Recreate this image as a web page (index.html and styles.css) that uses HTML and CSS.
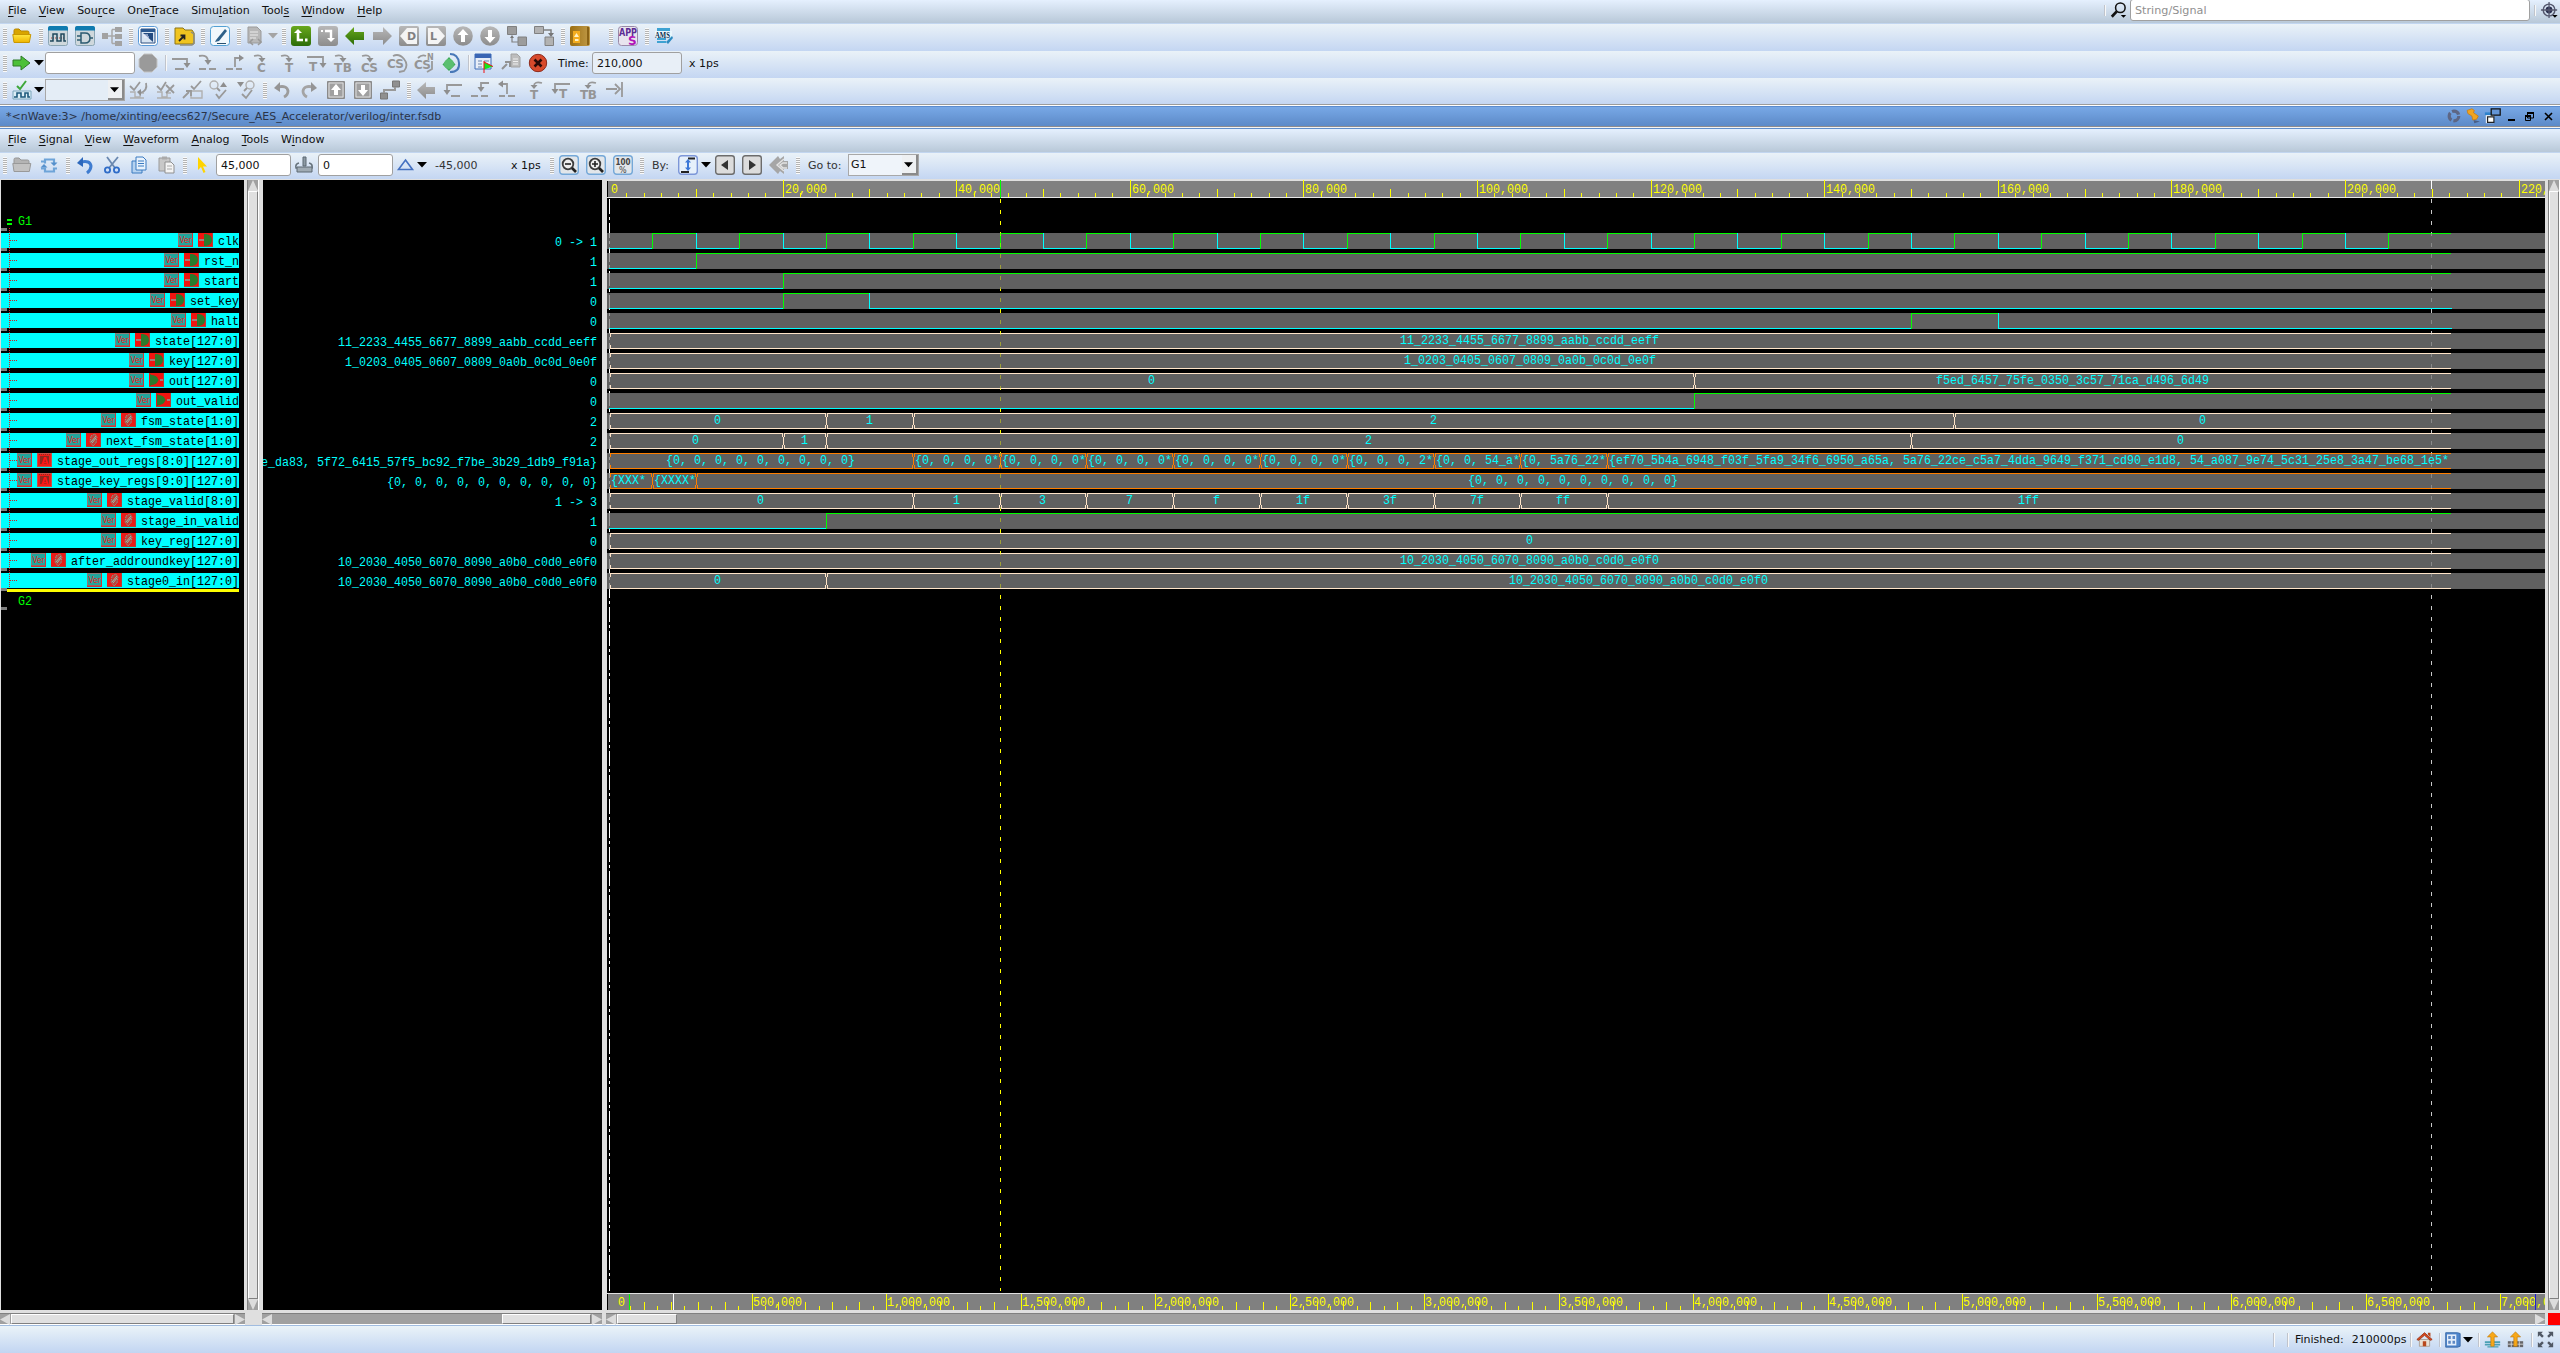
FILE: index.html
```html
<!DOCTYPE html>
<html lang="en">
<head>
<meta charset="utf-8">
<title>nWave</title>
<link rel="stylesheet" href="styles.css">
</head>
<body>
<svg class="sprite" aria-hidden="true">
  <defs>
    <linearGradient id="gGray" x1="0" y1="0" x2="0" y2="1"><stop offset="0" stop-color="#b8b8b8"/><stop offset="1" stop-color="#8c8c8c"/></linearGradient>
    <linearGradient id="gGreen" x1="0" y1="0" x2="0" y2="1"><stop offset="0" stop-color="#68a81c"/><stop offset="1" stop-color="#2c6c08"/></linearGradient>
    <linearGradient id="gGold" x1="0" y1="0" x2="1" y2="0"><stop offset="0" stop-color="#9c6e10"/><stop offset="1" stop-color="#c09a48"/></linearGradient>
    <linearGradient id="gYel" x1="0" y1="0" x2="0" y2="1"><stop offset="0" stop-color="#ffe640"/><stop offset="1" stop-color="#eeb400"/></linearGradient>
  </defs>
  <symbol id="folder" viewBox="0 0 20 20"><path d="M2 4.500q0-1.500 1.500-1.500h3.500l2 2h6.500q1.500 0 1.500 1.500V9H2z" fill="#d8a400" stroke="#b88600"/><path d="M.8 8.500h18l-1.500 8H2z" fill="url(#gYel)" stroke="#c99700"/></symbol>
  <symbol id="folder-gray" viewBox="0 0 20 20"><path d="M2 4.500q0-1.500 1.500-1.500h3.500l2 2h6.500q1.500 0 1.500 1.500V9H2z" fill="#b4b4b4" stroke="#969696"/><path d="M.8 8.500h18l-1.500 8H2z" fill="#c2c2c2" stroke="#999"/></symbol>
  <symbol id="wave-win" viewBox="0 0 20 20"><rect x=".5" y=".5" width="19" height="19" rx="2" fill="#cfd8dc" stroke="#8ba6b4"/><path d="M0 4.500V2q0-2 2-2h16q2 0 2 2v2.500z" fill="#0f7bb0"/><path d="M3 12h14" stroke="#b04a3a" stroke-dasharray="1 1"/><path d="M2 15h3V8h4v7h4V8h3v7h2" fill="none" stroke="#20485c" stroke-width="1.500"/></symbol>
  <symbol id="gate-win" viewBox="0 0 20 20"><rect x=".5" y=".5" width="19" height="19" rx="2" fill="#cfd8dc" stroke="#8ba6b4"/><path d="M0 4.500V2q0-2 2-2h16q2 0 2 2v2.500z" fill="#0f7bb0"/><path d="M6 7h4q5 0 5 5t-5 5H6zM2 10h4M2 14h4M15 12h3" fill="none" stroke="#2b5a70" stroke-width="1.500"/></symbol>
  <symbol id="tree-gray" viewBox="0 0 20 20"><path d="M0 7h6v6H0zM13 1h7v5h-7zM13 8h7v5h-7zM13 15h7v5h-7z" fill="#a2a2a2"/><path d="M6 10h7M10 3.500v14M10 3.500h3M10 17.500h3" stroke="#a8a8a8" fill="none" stroke-width="1.500"/></symbol>
  <symbol id="src-win" viewBox="0 0 20 20"><rect x=".5" y=".5" width="19" height="19" rx="3" fill="#fff" stroke="#5a9ad8"/><path d="M3 3h14v14H3z" fill="#d8e4f2" stroke="#2c4f80"/><path d="M3 3h14v3H3z" fill="#2c5890"/><path d="M5 7h10v9z" fill="#234a80"/><path d="M5 9h5M6 11h5" stroke="#eef" /></symbol>
  <symbol id="folder-open" viewBox="0 0 20 20"><path d="M1 2h8l2 2h7l2 3v11H1z" fill="#f0c420" stroke="#8c7418"/><path d="M17 6l3 2v9l-2 2H6" fill="none" stroke="#8d8d80" stroke-width="1.500"/><path d="M5 15l5-5M6.500 9.500h4v4" fill="none" stroke="#222" stroke-width="1.800"/></symbol>
  <symbol id="pen" viewBox="0 0 20 20"><rect x=".5" y=".5" width="19" height="19" rx="3" fill="#f2f8fc" stroke="#52a0d4"/><path d="M6 14L15 3l2 2-8 10-4 1z" fill="#2e6088"/><path d="M7 17.500h9" stroke="#28506e"/></symbol>
  <symbol id="doc" viewBox="0 0 20 20"><path d="M2 1h9l4 4v12H2z" fill="#b8b8b8" stroke="#9b9b9b"/><path d="M4 6h8M4 9h8M4 12h6" stroke="#ececec"/><path d="M7 13l-3 3 3 3M12 13l3 3-3 3" fill="none" stroke="#999" stroke-width="1.500"/></symbol>
  <symbol id="down" viewBox="0 0 10 20"><path d="M0 7h10L5 12.500z" fill="currentColor"/></symbol>
  <symbol id="turn-green" viewBox="0 0 20 20"><rect width="20" height="20" rx="3" fill="url(#gGreen)"/><path d="M7 6v8h5" fill="none" stroke="#fff" stroke-width="2.600"/><path d="M3 7l4-4 4 4zM14 12.500h2.500v3H14z" fill="#fff"/></symbol>
  <symbol id="turn-gray" viewBox="0 0 20 20"><rect width="20" height="20" rx="3" fill="url(#gGray)"/><path d="M7 5h6v8" fill="none" stroke="#fff" stroke-width="2.400"/><path d="M9 12h8l-4 4zM3 4h2v2H3z" fill="#fff"/></symbol>
  <symbol id="left-green" viewBox="0 0 20 20"><path d="M0 10L9 1v5h10v8H9v5z" fill="url(#gGreen)"/></symbol>
  <symbol id="right-gray" viewBox="0 0 20 20"><path d="M20 10L11 1v5H1v8h10v5z" fill="url(#gGray)"/></symbol>
  <symbol id="left-gray" viewBox="0 0 20 20"><path d="M1 10L10 2v5h9v7h-9v5z" fill="url(#gGray)"/></symbol>
  <symbol id="drv" viewBox="0 0 20 20"><rect width="20" height="20" rx="2" fill="url(#gGray)"/><path d="M1 10l7-8h10v16H8z" fill="#f4f4f4"/><text x="8" y="14" font-size="11" font-weight="bold" fill="#808080">D</text></symbol>
  <symbol id="load" viewBox="0 0 20 20"><rect width="20" height="20" rx="2" fill="url(#gGray)"/><path d="M19 10l-7-8H2v16h10z" fill="#f4f4f4"/><text x="4" y="14" font-size="11" font-weight="bold" fill="#808080">L</text></symbol>
  <symbol id="circ-up" viewBox="0 0 20 20"><circle cx="10" cy="10" r="9.800" fill="url(#gGray)"/><path d="M10 3l5.500 6H12v7H8V9H4.500z" fill="#fff"/></symbol>
  <symbol id="circ-down" viewBox="0 0 20 20"><circle cx="10" cy="10" r="9.800" fill="url(#gGray)"/><path d="M10 17l5.500-6H12V4H8v7H4.500z" fill="#fff"/></symbol>
  <symbol id="blk-a" viewBox="0 0 20 20"><path d="M.5.500h9v8h-9zM11 11h8.500v8.500H11z" fill="#9c9c9c" stroke="#808080"/><path d="M5 11v5h6" fill="none" stroke="#808080" stroke-width="1.200"/><path d="M3 12l2-3 2 3z" fill="#777"/></symbol>
  <symbol id="blk-b" viewBox="0 0 20 20"><path d="M.5.500h9v7h-9zM11 11h8.500v8.500H11z" fill="#b2b2b2" stroke="#808080"/><path d="M10 4h7v5" fill="none" stroke="#808080" stroke-width="1.500"/><path d="M14 7h6l-3 4z" fill="#777"/></symbol>
  <symbol id="book" viewBox="0 0 20 20"><rect width="20" height="20" rx="2" fill="url(#gGold)"/><path d="M17 1h2v18h-2z" fill="#8a6214"/><path d="M3 5h7v12H3z" fill="#f4ad20"/><path d="M6.500 7l2.500 4H4zM5 13h3.500v2H5z" fill="#fff2c4"/></symbol>
  <symbol id="apps" viewBox="0 0 20 20"><rect x=".5" y=".5" width="19" height="19" rx="3" fill="#e8e4ee" stroke="#9a8aa8"/><text x="1" y="10" font-size="10" font-weight="bold" fill="#5c2c94" textLength="18" lengthAdjust="spacingAndGlyphs">APP</text><text x="10" y="19" font-size="12" font-weight="bold" fill="#b014b8">S</text></symbol>
  <symbol id="ams" viewBox="0 0 20 20"><path d="M3 2h13v3H3zM3 12h9v2H3zM3 15h9v2H3z" fill="#3ea2d2"/><path d="M1 5h17v7H1z" fill="#eaf6fc"/><text x="1" y="12" font-size="8" font-weight="bold" fill="#0a2c4c" font-family="Liberation Serif" textLength="15" lengthAdjust="spacingAndGlyphs">AMS</text><path d="M12 16l6-6 1 2-5 6z" fill="#2d8ac0"/></symbol>
  <symbol id="go" viewBox="0 0 20 20"><path d="M1 7h8V3l9 7-9 7v-4H1z" fill="#4cc038" stroke="#2f7a26"/></symbol>
  <symbol id="stop" viewBox="0 0 20 20"><path d="M6 1h8l5 5v8l-5 5H6l-5-5V6z" fill="#9a9a9a" stroke="#c4c4c4"/></symbol>
  <symbol id="s-over" viewBox="0 0 20 20"><path d="M1 6h15v6M4 16h9" class="gs"/><path d="M12.500 10h7L16 15z" class="gf"/></symbol>
  <symbol id="s-into" viewBox="0 0 20 20"><path d="M1 3q9-2 9 6M1 16h7M11 16h7" class="gs"/><path d="M6.500 7h7L10 12z" class="gf"/></symbol>
  <symbol id="s-out" viewBox="0 0 20 20"><path d="M10 14V5h5M1 16h7M11 16h6" class="gs"/><path d="M14 1.500l5 3.500-5 3.500z" class="gf"/></symbol>
  <symbol id="s-hook" viewBox="0 0 20 20"><path d="M2 3q8-2 8 3" class="gs"/><path d="M6.500 5h7L10 9.500z" class="gf"/></symbol>
  <symbol id="s-c" viewBox="0 0 20 20"><use href="#s-hook"/><text x="5" y="19" class="gt">C</text></symbol>
  <symbol id="s-t" viewBox="0 0 20 20"><use href="#s-hook"/><text x="6" y="19" class="gt">T</text></symbol>
  <symbol id="s-tt" viewBox="0 0 20 20"><path d="M1 4h16v8" class="gs"/><path d="M13.500 10h7L17 15z" class="gf"/><text x="3" y="18" class="gt">T</text></symbol>
  <symbol id="s-tb" viewBox="0 0 20 20"><use href="#s-hook"/><text x="1" y="19" class="gt" textLength="18">TB</text></symbol>
  <symbol id="s-cs" viewBox="0 0 20 20"><use href="#s-hook"/><text x="1" y="19" class="gt" textLength="17">CS</text></symbol>
  <symbol id="s-cs2" viewBox="0 0 20 20"><path d="M6 3q6-3 11 3t0 12l-5 1" class="gs"/><text x="0" y="15" class="gt" textLength="17">CS</text></symbol>
  <symbol id="s-csn" viewBox="0 0 20 20"><path d="M4 5q4-4 8-2M18 8v8l-5 3" class="gs"/><text x="0" y="16" class="gt" textLength="17">CS</text><text x="13" y="7" font-size="8" font-weight="bold" fill="#959595">N</text></symbol>
  <symbol id="s-green" viewBox="0 0 20 20"><path d="M9 1q8 0 9 9t-9 9" fill="none" stroke="#4878b8" stroke-width="2"/><path d="M8 4l6.500 7.500L8 18l-6.500-6.500z" fill="#3faa58"/><circle cx="8" cy="11" r="5" fill="#5abf70"/></symbol>
  <symbol id="form" viewBox="0 0 20 20"><path d="M1 1h16v15H1z" fill="#e8eef8" stroke="#3c6cb8"/><path d="M1 1h16v4H1z" fill="#3a66b4"/><path d="M4 8h4M4 11h4M10 8h5M4 14h4" stroke="#6a86b0"/><path d="M10 9l9 4.500-9 3z" fill="#12e81c"/><path d="M10 8v12M10 9l9 4.500" stroke="#f01010"/></symbol>
  <symbol id="exp-doc" viewBox="0 0 20 20"><path d="M10 1h6l3 3v10h-9z" fill="#bdbdbd" stroke="#a2a2a2"/><path d="M12 6h5M12 8.500h5M12 11h5" stroke="#eee"/><path d="M1 16l5-5M4 9h5v5" fill="none" stroke="#929292" stroke-width="2"/></symbol>
  <symbol id="redx" viewBox="0 0 20 20"><circle cx="10" cy="10" r="8.700" fill="#d84a2c" stroke="#8c2a1c"/><path d="M6.500 6.500l7 7M13.500 6.500l-7 7" stroke="#2a0a08" stroke-width="2.600"/></symbol>
  <symbol id="wave-chk" viewBox="0 0 20 20"><path d="M1 11h18v8H1z" fill="#dceef6" stroke="#7aa6bc"/><path d="M2 17h3v-4h4v4h4v-4h3v4h2" fill="none" stroke="#1e5a7c" stroke-width="1.600"/><path d="M5 6l3 3 6-8" fill="none" stroke="#3ea83a" stroke-width="2"/></symbol>
  <symbol id="w1" viewBox="0 0 20 20"><path d="M2 12h5v5h5v-4h4M2 18h14" class="gl"/><path d="M2 6l4 4 6-8" class="gs"/><path d="M18 3q2 8-6 10" class="gs"/><path d="M13 9v7l-4-4z" class="gf"/></symbol>
  <symbol id="w2" viewBox="0 0 20 20"><path d="M2 12h5v5h5v-4h4M2 18h14" class="gl"/><path d="M2 6l4 4 5-8M11 5l8 8M19 5l-8 8" class="gs"/></symbol>
  <symbol id="w3" viewBox="0 0 20 20"><path d="M9 11h11v7H9z" class="gl"/><path d="M9 6l3 3 7-8M1 18l6-6M4 11h5v5" class="gs"/></symbol>
  <symbol id="w4" viewBox="0 0 20 20"><circle cx="5" cy="5" r="4" class="gl"/><path d="M8 8l3 3M7 14l3 4 7-8" class="gs"/><path d="M11 7h7l-3.500-5z" class="gf"/></symbol>
  <symbol id="w5" viewBox="0 0 20 20"><circle cx="14" cy="5" r="4" class="gl"/><path d="M11 8l-3 3M6 14l4 4 6-8" class="gs"/><path d="M1 2h7L4.500 7z" class="gf"/></symbol>
  <symbol id="undo-g" viewBox="0 0 20 20"><path d="M6 7q9-2 10 4 0 4-4 6" fill="none" stroke="#9c9c9c" stroke-width="2.800"/><path d="M2 8l6-6v10z" fill="#959595"/></symbol>
  <symbol id="redo-g" viewBox="0 0 20 20"><path d="M14 7q-9-2-10 4 0 4 4 6" fill="none" stroke="#a4a4a4" stroke-width="2.800"/><path d="M18 8l-6-6v10z" fill="#959595"/></symbol>
  <symbol id="box-up" viewBox="0 0 20 20"><path d="M1.500 1.500h17v17h-17z" fill="#a0a0a0" stroke="#8a8a8a"/><path d="M3 3h14v14H3z" fill="none" stroke="#ddd"/><path d="M10 4l5 6h-3v5H8v-5H5z" fill="#fff"/></symbol>
  <symbol id="box-down" viewBox="0 0 20 20"><path d="M1.500 1.500h17v17h-17z" fill="#a0a0a0" stroke="#8a8a8a"/><path d="M3 3h14v14H3z" fill="none" stroke="#ddd"/><path d="M10 16l5-6h-3V5H8v5H5z" fill="#fff"/></symbol>
  <symbol id="conn" viewBox="0 0 20 20"><path d="M12.500 1h7v6h-7zM.5 13h7v6h-7z" fill="#909090" stroke="#777"/><path d="M4 13v-3h11V7" fill="none" stroke="#999" stroke-width="2"/></symbol>
  <symbol id="b-over" viewBox="0 0 20 20"><path d="M19 5H4v6M8 16h9" class="gs"/><path d="M.5 10h7L4 15z" class="gf"/></symbol>
  <symbol id="b-into" viewBox="0 0 20 20"><path d="M19 3h-8v6M1 16h7M11 16h7" class="gs"/><path d="M7.500 7h7L11 12z" class="gf"/></symbol>
  <symbol id="b-out" viewBox="0 0 20 20"><path d="M10 14V4H5M2 16h6M11 16h7" class="gs"/><path d="M6 .5L1 4l5 3.500z" class="gf"/></symbol>
  <symbol id="b-t" viewBox="0 0 20 20"><path d="M18 3q-8-2-8 3" class="gs"/><path d="M6.500 5h7L10 9z" class="gf"/><text x="6" y="19" class="gt">T</text></symbol>
  <symbol id="b-tt" viewBox="0 0 20 20"><path d="M19 4H4v6" class="gs"/><path d="M.5 9h7L4 14z" class="gf"/><text x="8" y="18" class="gt">T</text></symbol>
  <symbol id="b-tb" viewBox="0 0 20 20"><path d="M18 3q-8-2-8 3" class="gs"/><path d="M6.500 5h7L10 9z" class="gf"/><text x="2" y="19" class="gt" textLength="17">TB</text></symbol>
  <symbol id="to-end" viewBox="0 0 20 20"><path d="M1 9h11M17 2v15" class="gs"/><path d="M10 4l5 5-5 5" class="gs"/></symbol>
  <symbol id="reload" viewBox="0 0 20 20"><path d="M2 6.500h4M6 8.500V4.500h9v4M2 13.500h4v3h9v-4M15 13.500h3" fill="none" stroke="#6ea4d8" stroke-width="2.200"/><path d="M11.500 7.500h7L15 11zM1.500 12.500h7L5 9z" fill="#5590cc"/></symbol>
  <symbol id="undo" viewBox="0 0 20 20"><path d="M6 7q9-2 10 4 0 4-4 7" fill="none" stroke="#3f7cd0" stroke-width="3"/><path d="M2 8l6-6v10z" fill="#2d68bc"/></symbol>
  <symbol id="cut" viewBox="0 0 20 20"><path d="M5 2l8 11M16 2L7 13" stroke="#6a88b0" stroke-width="1.800"/><circle cx="5.500" cy="15" r="2.600" fill="none" stroke="#2f6cc8" stroke-width="1.800"/><circle cx="14.500" cy="15" r="2.600" fill="none" stroke="#2f6cc8" stroke-width="1.800"/></symbol>
  <symbol id="copy" viewBox="0 0 20 20"><path d="M3 6h10v12H3z" fill="#b5d2f0" stroke="#3a7ac0"/><path d="M7 2h7l3 3v10H7z" fill="#e8f2fc" stroke="#3a7ac0"/><path d="M9 6h6M9 8.500h6M9 11h6" stroke="#3a7ac0"/></symbol>
  <symbol id="paste" viewBox="0 0 20 20"><path d="M3 3h11v13H3z" fill="#c8c8c8" stroke="#9a9a9a"/><path d="M6 1.500h5v3H6z" fill="#aaa"/><path d="M9 7h6l3 3v8H9z" fill="#f4f4f4" stroke="#8f8f8f"/><path d="M11 11h5M11 14h5" stroke="#aaa"/></symbol>
  <symbol id="cursor" viewBox="0 0 20 20"><path d="M6 2v13l3-3 2.500 6 2-1-2.500-5.500h4z" fill="#ffd400"/></symbol>
  <symbol id="probe" viewBox="0 0 20 20"><path d="M9 2h3v9H9z" fill="#8d9aa4" stroke="#5c6872"/><path d="M5 8q-4 1-3 5h16q1-4-3-5" fill="none" stroke="#66727c" stroke-width="1.600"/><path d="M3 12h15v5H3z" fill="#a0abb4" stroke="#5c6872"/></symbol>
  <symbol id="delta" viewBox="0 0 20 20"><path d="M9.500 5l7 9.500h-14z" fill="none" stroke="#4470c0" stroke-width="1.600"/></symbol>
  <symbol id="btn" viewBox="0 0 20 20"><rect x=".7" y=".7" width="18.600" height="18.600" rx="3" fill="#e2e6ea" stroke="#74a8d8" stroke-width="1.400"/></symbol>
  <symbol id="zout" viewBox="0 0 20 20"><use href="#btn"/><circle cx="9" cy="9" r="5.300" fill="#eee" stroke="#3c3c3c" stroke-width="1.800"/><path d="M13 13l4 4" stroke="#222" stroke-width="2.600"/><path d="M6 9h6" stroke="#222" stroke-width="1.600"/></symbol>
  <symbol id="zin" viewBox="0 0 20 20"><use href="#btn"/><circle cx="9" cy="9" r="5.300" fill="#eee" stroke="#3c3c3c" stroke-width="1.800"/><path d="M13 13l4 4" stroke="#222" stroke-width="2.600"/><path d="M6 9h6M9 6v6" stroke="#222" stroke-width="1.600"/></symbol>
  <symbol id="z100" viewBox="0 0 20 20"><use href="#btn"/><text x="2.500" y="9.500" font-size="8.500" font-weight="bold" fill="#444" textLength="15" lengthAdjust="spacingAndGlyphs">100</text><text x="6" y="17.500" font-size="8" fill="#444">%</text></symbol>
  <symbol id="edge" viewBox="0 0 20 20"><rect x=".7" y=".7" width="18.600" height="18.600" rx="3" fill="#e6f0fb" stroke="#7c96d8" stroke-width="1.400"/><path d="M10 3.500h7M3 17h8" stroke="#222" stroke-width="2"/><path d="M10 6v8" stroke="#3c78d8" stroke-width="2"/><path d="M7 7.500L10 4l3 3.500zM7 12.500l3 3.500 3-3.500z" fill="#3c78d8"/></symbol>
  <symbol id="prev" viewBox="0 0 20 20"><rect x=".7" y=".7" width="18.600" height="18.600" rx="2.500" fill="#dcdcdc" stroke="#6c6c6c" stroke-width="1.400"/><path d="M6 10l7-5v10z" fill="#333"/></symbol>
  <symbol id="next" viewBox="0 0 20 20"><rect x=".7" y=".7" width="18.600" height="18.600" rx="2.500" fill="#dcdcdc" stroke="#6c6c6c" stroke-width="1.400"/><path d="M14 10L7 5v10z" fill="#333"/></symbol>
  <symbol id="back2" viewBox="0 0 20 20"><path d="M0 10l9-9 2 3 4-3v5h4v8h-4v5l-4-3-2 3z" fill="#a6a6a6"/><path d="M15 4l-7 6 7 6M18 8h-4l-3 2 3 3h4" fill="none" stroke="#e4e4e4" stroke-width="1.400"/></symbol>
  <symbol id="search" viewBox="0 0 20 20"><circle cx="11.500" cy="7.500" r="5.300" fill="none" stroke="#111" stroke-width="1.700"/><path d="M7.500 11.500L2 17.500" stroke="#111" stroke-width="3"/><path d="M12 15.500h6l-3 3z"/></symbol>
  <symbol id="target" viewBox="0 0 20 20"><circle cx="9.500" cy="10" r="6.500" fill="none" stroke="#55586e" stroke-width="1.600"/><circle cx="9.500" cy="10" r="3.800" fill="#2c3050"/><path d="M9.500 1v18M.5 10h18" stroke="#55586e" stroke-width="1.400"/><path d="M13 15.500h6l-3 3z"/></symbol>
  <symbol id="aperture" viewBox="0 0 20 20"><circle cx="10" cy="10" r="6" fill="none" stroke="#5d6684" stroke-width="4" stroke-dasharray="10 2.500"/></symbol>
  <symbol id="pin" viewBox="0 0 20 20"><path d="M10 15l8 2-7 2z" fill="#4a5f86"/><path d="M2 3l6-2 3 2-1 3 6 4-2 4-5 1-1-5-5-3z" fill="#f0a420" stroke="#c87c10"/></symbol>
  <symbol id="popout" viewBox="0 0 20 20"><path d="M2 7h9v11H2z" fill="#e8eef4"/><path d="M1 6h9v3H1z" fill="#2d82cc"/><path d="M4 11h7v6H4z" fill="#fff" stroke="#222" stroke-width="1.300"/><path d="M8 2h10v7H8z" fill="#6495d6" stroke="#111" stroke-width="1.400"/></symbol>
  <symbol id="home" viewBox="0 0 20 20"><path d="M4 10h12v8H4z" fill="#e8e0d4" stroke="#a89c90"/><path d="M1 10l9-8 9 8-2 1-7-6-7 6z" fill="#d44a20" stroke="#9a3010"/><path d="M14 2h3v5l-3-3zM8 12h4v6H8z" fill="#b8481c"/></symbol>
  <symbol id="gridw" viewBox="0 0 20 20"><path d="M2 2h14l3 1v15l-3 1H2z" fill="#4f86cc" stroke="#3464a4"/><path d="M3.500 4h11v13h-11z" fill="#e4eefa"/><path d="M5 6h3v3.500H5zM10 6h3v3.500h-3zM5 11.500h3V15H5zM10 11.500h3V15h-3z" fill="#5c88c4"/></symbol>
  <symbol id="st1" viewBox="0 0 20 20"><path d="M1 12h18v2H1zM1 15h18v2H1zM4 18h13v1.500H4z" fill="#4aa0b4"/><path d="M10 1l6 6h-4v11H8V7H4z" fill="#f8a818" stroke="#b87408" stroke-width=".7"/></symbol>
  <symbol id="st2" viewBox="0 0 20 20"><path d="M1 12h18v7H1z" fill="#66666a"/><path d="M1 15.500h18M5 12v7M14.500 12v7" stroke="#ddd"/><path d="M10 1l6 6h-4v11H8V7H4z" fill="#f8a818" stroke="#b87408" stroke-width=".7"/></symbol>
  <symbol id="full" viewBox="0 0 20 20"><path d="M1 1h6L5 3l3 3-2 2-3-3-2 2zM19 1v6l-2-2-3 3-2-2 3-3-2-2zM1 19v-6l2 2 3-3 2 2-3 3 2 2zM19 19h-6l2-2-3-3 2-2 3 3 2-2z" fill="#505864"/></symbol>
  <symbol id="ver" viewBox="0 0 15 14"><path d="M0 0h15v14H0z" fill="#c83838"/><path d="M0 0h14v12.500H0z" fill="#8c7c78"/><path d="M1 1h13v11H1z" fill="#22a49c"/><text x="1.500" y="9.500" font-size="8.500" fill="#f01818" textLength="12" lengthAdjust="spacingAndGlyphs">Ver</text></symbol>
  <symbol id="t-in" viewBox="0 0 15 14"><path d="M0 0h15v14H0z" fill="#b83c34"/><path d="M0 0h14v13H0z" fill="#f01410"/><path d="M6 1h2q6 1 6 6t-6 6H6z" fill="#2a7a2c"/><path d="M1 7h5" stroke="#5ce0e0"/></symbol>
  <symbol id="t-out" viewBox="0 0 15 14"><path d="M0 0h15v14H0z" fill="#b83c34"/><path d="M0 0h14v13H0z" fill="#f01410"/><path d="M1 1l9 6-9 6z" fill="#2a7a2c"/><path d="M1 2q8 0 8 5t-8 5z" fill="#2a7a2c"/><path d="M11 7h3" stroke="#5ce0e0"/></symbol>
  <symbol id="t-reg" viewBox="0 0 15 14"><path d="M0 0h15v14H0z" fill="#b83c34"/><path d="M0 0h14v13H0z" fill="#e81c18"/><path d="M5 3l4-2 2 3-1 6-3 3-3-4z" fill="#c04038" stroke="#7aa494" stroke-dasharray="1.500 1"/><path d="M5 9l5-6M6 10l4-5" stroke="#90c0b0"/></symbol>
  <symbol id="t-arr" viewBox="0 0 15 14"><path d="M0 0h15v14H0z" fill="#c85048"/><path d="M1 1h13v12H1z" fill="#f01c18"/><path d="M3 3h9v8H3z" fill="#8c2820"/><path d="M2 1.500h11" stroke="#8c2820" stroke-dasharray="1 1"/><text x="4.300" y="10.500" font-size="9" font-weight="bold" fill="#ff1414">A</text></symbol>
</svg>

<div class="menubar">
  <span><u>F</u>ile</span><span><u>V</u>iew</span><span>Sou<u>r</u>ce</span><span>One<u>T</u>race</span><span>Simu<u>l</u>ation</span><span>Tool<u>s</u></span><span><u>W</u>indow</span><span><u>H</u>elp</span>
  <div class="finder"><i class="sep"></i><svg class="ic fi"><use href="#search"/></svg><div class="field find">String/Signal</div><i class="sep"></i><svg class="ic ti"><use href="#target"/></svg></div>
</div>

<div class="toolbar">
  <i class="grip"></i><svg class="ic"><use href="#folder"/></svg>
  <i class="grip"></i><svg class="ic"><use href="#wave-win"/></svg><svg class="ic"><use href="#gate-win"/></svg><svg class="ic"><use href="#tree-gray"/></svg>
  <i class="grip"></i><svg class="ic"><use href="#src-win"/></svg>
  <i class="grip"></i><svg class="ic"><use href="#folder-open"/></svg>
  <i class="grip"></i><svg class="ic"><use href="#pen"/></svg>
  <i class="grip"></i><svg class="ic tight"><use href="#doc"/></svg><svg class="dd dim"><use href="#down"/></svg>
  <i class="grip"></i><svg class="ic"><use href="#turn-green"/></svg><svg class="ic"><use href="#turn-gray"/></svg><svg class="ic"><use href="#left-green"/></svg><svg class="ic"><use href="#right-gray"/></svg><svg class="ic"><use href="#drv"/></svg><svg class="ic"><use href="#load"/></svg><svg class="ic"><use href="#circ-up"/></svg><svg class="ic"><use href="#circ-down"/></svg><svg class="ic"><use href="#blk-a"/></svg><svg class="ic"><use href="#blk-b"/></svg>
  <i class="grip"></i><svg class="ic wide"><use href="#book"/></svg>
  <i class="grip"></i><svg class="ic"><use href="#apps"/></svg>
  <i class="grip"></i><svg class="ic"><use href="#ams"/></svg>
</div>

<div class="toolbar">
  <i class="grip"></i><svg class="ic tight"><use href="#go"/></svg><svg class="dd"><use href="#down"/></svg>
  <div class="field run"></div><svg class="ic"><use href="#stop"/></svg><i class="sep"></i>
  <svg class="ic"><use href="#s-over"/></svg><svg class="ic"><use href="#s-into"/></svg><svg class="ic"><use href="#s-out"/></svg><svg class="ic"><use href="#s-c"/></svg><svg class="ic"><use href="#s-t"/></svg><svg class="ic"><use href="#s-tt"/></svg><svg class="ic"><use href="#s-tb"/></svg><svg class="ic"><use href="#s-cs"/></svg><svg class="ic"><use href="#s-cs2"/></svg><svg class="ic"><use href="#s-csn"/></svg><svg class="ic"><use href="#s-green"/></svg><i class="sep"></i>
  <svg class="ic"><use href="#form"/></svg><svg class="ic"><use href="#exp-doc"/></svg><svg class="ic"><use href="#redx"/></svg>
  <span class="lbl time">Time:</span><div class="field tval">210,000</div><span class="lbl">x 1ps</span>
</div>

<div class="toolbar third">
  <i class="grip"></i><svg class="ic tight"><use href="#wave-chk"/></svg><svg class="dd"><use href="#down"/></svg>
  <div class="combo c1"><span></span><b><svg class="dd"><use href="#down"/></svg></b></div>
  <svg class="ic"><use href="#w1"/></svg><svg class="ic"><use href="#w2"/></svg><svg class="ic"><use href="#w3"/></svg><svg class="ic"><use href="#w4"/></svg><svg class="ic"><use href="#w5"/></svg>
  <i class="grip"></i><svg class="ic"><use href="#undo-g"/></svg><svg class="ic"><use href="#redo-g"/></svg><svg class="ic"><use href="#box-up"/></svg><svg class="ic"><use href="#box-down"/></svg><svg class="ic"><use href="#conn"/></svg>
  <i class="grip"></i><svg class="ic"><use href="#left-gray"/></svg><svg class="ic"><use href="#b-over"/></svg><svg class="ic"><use href="#b-into"/></svg><svg class="ic"><use href="#b-out"/></svg><svg class="ic"><use href="#b-t"/></svg><svg class="ic"><use href="#b-tt"/></svg><svg class="ic"><use href="#b-tb"/></svg><svg class="ic"><use href="#to-end"/></svg>
</div>

<div class="titlebar">
  <span class="ttext">*&lt;nWave:3&gt; /home/xinting/eecs627/Secure_AES_Accelerator/verilog/inter.fsdb</span>
  <div class="winbtns">
    <svg width="16" height="16"><use href="#aperture"/></svg><svg width="17" height="16"><use href="#pin"/></svg><svg width="18" height="18"><use href="#popout"/></svg>
    <svg width="9" height="9"><path d="M1 7h7v2H1z"/></svg>
    <svg width="9" height="9"><path d="M2.500 1h6v5h-6zM.500 4h5v4.500h-5z" fill="none" stroke="#000"/><path d="M2 0h7v2H2zM0 3h6v2H0z"/></svg>
    <svg width="9" height="9"><path d="M1 1l7 7M8 1L1 8" stroke="#000" stroke-width="1.600"/></svg>
  </div>
</div>

<div class="menubar second">
  <span><u>F</u>ile</span><span><u>S</u>ignal</span><span><u>V</u>iew</span><span><u>W</u>aveform</span><span><u>A</u>nalog</span><span><u>T</u>ools</span><span>W<u>i</u>ndow</span>
</div>

<div class="toolbar nav">
  <i class="grip"></i><svg class="ic"><use href="#folder-gray"/></svg><svg class="ic"><use href="#reload"/></svg>
  <i class="grip"></i><svg class="ic"><use href="#undo"/></svg><svg class="ic"><use href="#cut"/></svg><svg class="ic"><use href="#copy"/></svg><svg class="ic"><use href="#paste"/></svg>
  <i class="grip"></i><svg class="ic cur"><use href="#cursor"/></svg><div class="field t1">45,000</div><svg class="ic probe"><use href="#probe"/></svg><div class="field t1 t2">0</div>
  <svg class="ic tri"><use href="#delta"/></svg><svg class="dd"><use href="#down"/></svg><span class="lbl diff">-45,000</span><span class="lbl unit">x 1ps</span>
  <i class="grip"></i><svg class="ic"><use href="#zout"/></svg><svg class="ic"><use href="#zin"/></svg><svg class="ic"><use href="#z100"/></svg>
  <i class="grip"></i><span class="lbl by">By:</span><svg class="ic edge"><use href="#edge"/></svg><svg class="dd"><use href="#down"/></svg><svg class="ic"><use href="#prev"/></svg><svg class="ic"><use href="#next"/></svg><svg class="ic"><use href="#back2"/></svg>
  <i class="grip"></i><span class="lbl goto">Go to:</span><div class="combo c2"><span>G1</span><b><svg class="dd"><use href="#down"/></svg></b></div>
</div>

<div class="work">
  <div class="col names">
    <div class="pane" id="names"></div>
    <div class="hsb"><i class="arr l"></i><div class="track"><div class="thumb n"></div></div><i class="arr r"></i></div>
  </div>
  <div class="col bar"><div class="vsb"><i class="arr u"></i><div class="thumb"></div><i class="arr d"></i></div></div>
  <div class="col values">
    <div class="pane" id="values"></div>
    <div class="hsb"><i class="arr l"></i><div class="track"><div class="thumb v"></div></div><i class="arr r"></i></div>
  </div>
  <div class="col waves">
    <div class="pane"><svg id="wave" width="1938" height="1130" viewBox="607 180 1938 1130"></svg></div>
    <div class="hsb"><i class="arr l"></i><div class="track"><div class="thumb w"></div></div><i class="arr r"></i></div>
  </div>
  <div class="col bar last"><div class="vsb"><i class="arr u"></i><div class="thumb"></div><i class="arr d"></i></div><div class="red"></div></div>
</div>

<div class="status">
  <i class="sep s1"></i><i class="sep s2"></i><span class="fin">Finished:</span><span class="ps">210000ps</span>
  <i class="sep s3"></i><svg class="ic"><use href="#home"/></svg><i class="sep s4"></i><svg class="ic g"><use href="#gridw"/></svg><svg class="dd"><use href="#down"/></svg>
  <i class="sep s5"></i><svg class="ic"><use href="#st1"/></svg><svg class="ic st2"><use href="#st2"/></svg><i class="sep s6"></i><svg class="ic"><use href="#full"/></svg>
</div>
<script src="script.js"></script>
</body>
</html>
```
FILE: styles.css
```css
* { box-sizing: border-box; }
html, body { margin: 0; }
body {
  width: 2560px; height: 1353px; overflow: hidden;
  display: flex; flex-direction: column;
  font: 11px "DejaVu Sans", sans-serif; color: #111; background: #e0e0e0;
}
.sprite { position: absolute; width: 0; height: 0; }
svg { display: block; flex: none; overflow: visible; }
.gs { fill: none; stroke: #999; stroke-width: 1.8; }
.gl { fill: none; stroke: #b0b0b0; stroke-width: 1.4; }
.gf { fill: #8e8e8e; }
.gt { font-size: 12px; font-weight: bold; fill: #959595; }

.menubar {
  flex: none; height: 24px; padding: 0 0 3px 8px;
  display: flex; align-items: center; gap: 12.3px;
  background: linear-gradient(#e5f0fe, #b8c8d8); border-bottom: 1px solid #c2d6f0;
}
.menubar u { text-underline-offset: 2px; }
.menubar.second { border-top: 1px solid #5f8fcc; height: 25px; }
.finder { margin-left: auto; display: flex; align-items: center; height: 22px; }
.find { width: 400px; height: 22px; margin: 0 4px 0 2px; color: #909090; font-size: 11.200px; border-width: 1px; padding-top: 3px; }
.sep { width: 2px; height: 11px; flex: none; background: #c0c4cc; border-right: 1px solid #f8f8f8; }
.ic { width: 20px; height: 20px; margin-right: 7px; }
.ic.fi { width: 18px; height: 18px; margin: 0 0 0 4px; }
.ic.ti { width: 19px; height: 18px; margin: 0 1px 0 4px; }

.toolbar {
  flex: none; height: 27px; padding: 0 3px 3px;
  display: flex; align-items: center;
  background: linear-gradient(#eaf2f8, #c4d6f2);
}
.toolbar.third, .toolbar.nav { height: 26px; padding-bottom: 2px; }
.grip {
  flex: none; width: 4px; height: 17px; margin-right: 5px;
  background: repeating-linear-gradient(#fafafa 0 1px, #b4b4b4 1px 2px);
}
.ic.tight { margin-right: 2px; }
.ic.wide { margin-right: 19px; }
.dd { width: 10px; height: 20px; color: #000; }
.dd.dim { color: #a4a4a4; margin-right: 4px; }
.field {
  flex: none; height: 22px; background: #fff; border: 1px solid #a0a0a0; border-radius: 3px;
  padding: 4px 4px 0; line-height: 13px; white-space: nowrap;
}
.run { width: 90px; margin: 0 3px 0 1px; }
.run + .ic + .sep, .ic + .sep { height: 16px; margin-right: 4px; }
.toolbar .sep { width: 2px; }
.lbl { flex: none; white-space: nowrap; }
.time { width: 34px; margin-left: 3px; }
.tval { width: 90px; margin-right: 7px; background: #e8eff7; }
.combo { flex: none; height: 22px; display: flex; justify-content: space-between; background: #e4edf6; border: 1px solid #a8a8a8; }
.combo span { padding: 3px 2px; line-height: 14px; }
.combo b { width: 16px; background: #eef0f2; border-right: 2px solid #8a8a8a; border-bottom: 2px solid #8a8a8a; padding-left: 2px; }
.combo b .dd { width: 9px; }
.c1 { width: 80px; margin: 0 3px 0 1px; }
.c2 { width: 71px; background: #eff4fa; margin-left: 6px; }
.titlebar {
  flex: none; height: 24px; display: flex; align-items: center; justify-content: space-between;
  padding: 0 7px 0 6px; color: #2a3448;
  border-top: 1px solid #9c9c9c; border-bottom: 1px solid #f4f4f4;
  background: linear-gradient(#fff 0 1px, #5b8cd0 1px 2px, #78a8e6 2px, #5c8ac8 21px, #8c8c90 21px 22px);
}
.winbtns { display: flex; align-items: center; }
.winbtns svg:nth-child(1) { margin-right: 3px; }
.winbtns svg:nth-child(2) { margin-right: 2px; }
.winbtns svg:nth-child(3) { margin-right: 5px; }
.winbtns svg:nth-child(4) { margin-right: 9px; }
.winbtns svg:nth-child(5) { margin-right: 10px; }
.ic.cur { margin-right: 4px; }
.t1 { width: 75px; margin-right: 3px; }
.t2 { margin-right: 3px; }
.ic.probe { margin-right: 4px; }
.ic.tri { margin-right: 1px; }
.diff { width: 76px; padding-left: 8px; color: #333; }
.unit { width: 47px; padding-left: 8px; }
.by { width: 29px; padding-left: 3px; color: #333; }
.ic.edge { margin-right: 3px; }
.edge + .dd { margin-right: 4px; }
.goto { width: 37px; padding-left: 3px; color: #333; }

.work { flex: none; height: 1146px; padding-top: 1px; display: flex; background: #dfdfdf; }
.col { display: flex; flex-direction: column; flex: none; }
.pane { background: #000; height: 1130px; overflow: hidden; flex: none; }
.names { width: 247px; }
.names .pane { width: 243px; margin-left: 1px; }
.names .hsb { width: 245px; }
.bar { width: 12px; }
.values { width: 340px; margin-left: 3px; }
.values .pane { width: 339px; margin-left: 1px; }
.waves { width: 1939px; margin-left: 4px; }
.waves .pane { width: 1938px; margin-left: 1px; }
.last { margin-left: 3px; }
.hsb { height: 12px; margin-top: 3px; display: flex; background: #a0a0a0; border-top: 1px solid #808080; border-bottom: 1px solid #fff; }
.vsb { height: 1130px; display: flex; flex-direction: column; background: #a0a0a0; border-left: 1px solid #808080; border-right: 1px solid #fff; }
.thumb { background: #e0e0e0; border: 1px solid; border-color: #fff #808080 #808080 #fff; }
.vsb .thumb { flex: 1; }
.track { flex: 1; display: flex; padding: 0 1px; }
.thumb.n { flex: 1; }
.thumb.v { width: 89px; margin-left: auto; }
.thumb.w { width: 60px; }
.arr { display: block; flex: none; width: 10px; height: 11px; background: #dcdcdc; }
.arr.l { clip-path: polygon(0 50%, 100% 0, 100% 100%); }
.arr.r { clip-path: polygon(100% 50%, 0 0, 0 100%); }
.arr.u { clip-path: polygon(50% 0, 100% 100%, 0 100%); }
.arr.d { clip-path: polygon(50% 100%, 100% 0, 0 0); }
.red { height: 12px; margin-top: 3px; background: #f00; }

.mono text, #wave text { font: 13.5px "Liberation Mono", monospace; }
.mono { height: 15px; }
.group { display: flex; color: #0f0; }
.group .eq { width: 5px; height: 6px; margin: 39px 6px 0 6px; border: solid #0f0; border-width: 2px 0; }
.group .mono { margin-top: 33px; fill: #0f0; }
.group.first { height: 48px; }
.sig {
  height: 20px; width: 238px; padding-top: 5px;
  background: linear-gradient(#808080, #808080) 0 0 / 6px 3px no-repeat;
}
.sig .in {
  height: 15px; display: flex; align-items: flex-start; background: #0ff; fill: #000;
}
.sig .tree { width: 8px; height: 8px; margin: 0 auto 0 8px; border-bottom: 1px dotted #d02020; position: relative; }
.sig .tree::before { content: ""; position: absolute; left: 0; top: -5px; width: 1px; height: 20px; background: repeating-linear-gradient(#e02020 0 1px, transparent 1px 2px); }
.sig .k { width: 15px; height: 14px; margin-right: 5px; }
.insert { width: 238px; height: 19px; background: linear-gradient(#808080, #808080) 0 0 / 6px 3px no-repeat, linear-gradient(#ff0, #ff0) 6px 1px / 232px 3px no-repeat; }
.group.g2 { height: 3px; padding-left: 17px; background: linear-gradient(#808080, #808080) 0 0 / 6px 3px no-repeat; }
.group.g2 .mono { margin-top: -14px; }
.vals { padding-top: 54px; display: flex; flex-direction: column; align-items: flex-end; padding-right: 5px; }
.vals .mono { height: 20px; fill: #0ff; }

.status {
  flex: none; height: 28px; border-top: 1px solid #a0bce0;
  background: linear-gradient(#eaf3f8, #c2d5f2);
  display: flex; align-items: center; padding-left: 2273px; 
}
.status .sep { margin: 0; height: 14px; }
.status .s2 { margin-left: 12px; }
.fin { width: 59px; padding-left: 6px; white-space: nowrap; }
.ps { width: 68px; padding-left: 7px; white-space: nowrap; }
.status .ic { width: 17px; height: 17px; margin: 0 6px 0 4px; }
.status .s3 { margin-left: 1px; }
.status .ic.g { margin: 0 2px 0 3px; }
.status .dd { margin-right: 5px; }
.status .ic.st2 { margin: 0 7px 0 0; }
```
FILE: script.js
```js
const CH = 7;
const T0 = 609, SCALE = 0.00868, END = 2451;
const tx = t => Math.round(T0 + t * SCALE);
const esc = s => s.replace(/&/g, '&amp;').replace(/</g, '&lt;').replace(/>/g, '&gt;');
const mono = (s, base) =>
  `<svg class="mono" width="${s.length * CH}"><text x="0" y="${base}" textLength="${s.length * CH}" lengthAdjust="spacingAndGlyphs" xml:space="preserve">${esc(s)}</text></svg>`;

const AES = '10_2030_4050_6070_8090_a0b0_c0d0_e0f0';
const K0 = '{0, 0, 0, 0*';
const signals = [
  { n: 'clk', k: 'in', v: '0 -> 1', bit: Array.from({ length: 42 }, (_, i) => [i * 5000, i % 2]) },
  { n: 'rst_n', k: 'in', v: '1', bit: [[0, 0], [10000, 1]] },
  { n: 'start', k: 'in', v: '1', bit: [[0, 0], [20000, 1]] },
  { n: 'set_key', k: 'in', v: '0', bit: [[0, 0], [20000, 1], [30000, 0]] },
  { n: 'halt', k: 'in', v: '0', bit: [[0, 0], [150000, 1], [160000, 0]] },
  { n: 'state[127:0]', k: 'in', v: '11_2233_4455_6677_8899_aabb_ccdd_eeff', bus: [[0, '11_2233_4455_6677_8899_aabb_ccdd_eeff']] },
  { n: 'key[127:0]', k: 'in', v: '1_0203_0405_0607_0809_0a0b_0c0d_0e0f', bus: [[0, '1_0203_0405_0607_0809_0a0b_0c0d_0e0f']] },
  { n: 'out[127:0]', k: 'out', v: '0', bus: [[0, '0'], [125000, 'f5ed_6457_75fe_0350_3c57_71ca_d496_6d49']] },
  { n: 'out_valid', k: 'out', v: '0', bit: [[0, 0], [125000, 1]] },
  { n: 'fsm_state[1:0]', k: 'reg', v: '2', bus: [[0, '0'], [25000, '1'], [35000, '2'], [155000, '0']] },
  { n: 'next_fsm_state[1:0]', k: 'reg', v: '2', bus: [[0, '0'], [20000, '1'], [25000, '2'], [150000, '0']] },
  { n: 'stage_out_regs[8:0][127:0]', k: 'arr', v: 'e_da83, 5f72_6415_57f5_bc92_f7be_3b29_1db9_f91a}', color: '#ff7f00',
    bus: [[0, '{0, 0, 0, 0, 0, 0, 0, 0, 0}'], [35000, K0], [45000, K0], [55000, K0], [65000, K0], [75000, K0],
      [85000, '{0, 0, 0, 2*'], [95000, '{0, 0, 54_a*'], [105000, '{0, 5a76_22*'],
      [115000, '{ef70_5b4a_6948_f03f_5fa9_34f6_6950_a65a, 5a76_22ce_c5a7_4dda_9649_f371_cd90_e1d8, 54_a087_9e74_5c31_25e8_3a47_be68_1e5*']] },
  { n: 'stage_key_regs[9:0][127:0]', k: 'arr', v: '{0, 0, 0, 0, 0, 0, 0, 0, 0, 0}', color: '#ff7f00',
    bus: [[0, '{XXX*'], [5000, '{XXXX*'], [10000, '{0, 0, 0, 0, 0, 0, 0, 0, 0, 0}']] },
  { n: 'stage_valid[8:0]', k: 'reg', v: '1 -> 3',
    bus: [[0, '0'], [35000, '1'], [45000, '3'], [55000, '7'], [65000, 'f'], [75000, '1f'], [85000, '3f'], [95000, '7f'], [105000, 'ff'], [115000, '1ff']] },
  { n: 'stage_in_valid', k: 'reg', v: '1', bit: [[0, 0], [25000, 1]] },
  { n: 'key_reg[127:0]', k: 'reg', v: '0', bus: [[0, '0']] },
  { n: 'after_addroundkey[127:0]', k: 'reg', v: AES, bus: [[0, AES]] },
  { n: 'stage0_in[127:0]', k: 'reg', v: AES, bus: [[0, '0'], [25000, AES]] }
];

// Signal name list
document.getElementById('names').innerHTML =
  `<div class="group first"><i class="eq"></i>${mono('G1', 12)}</div>` +
  signals.map(s => `<div class="sig"><div class="in"><i class="tree"></i><svg class="k"><use href="#ver"/></svg><svg class="k"><use href="#t-${s.k}"/></svg>${mono(s.n, 11.5)}</div></div>`).join('') +
  `<div class="insert"></div><div class="group g2">${mono('G2', 12)}</div>`;

// Values at the cursor
const vals = document.getElementById('values');
vals.classList.add('vals');
vals.innerHTML = signals.map(s => mono(s.v, 12)).join('');

// Expand the icon symbols in place
let use;
document.querySelectorAll('symbol use').forEach(u => {
  const g = document.createElementNS('http://www.w3.org/2000/svg', 'g');
  g.innerHTML = document.querySelector(u.getAttribute('href')).innerHTML;
  u.replaceWith(g);
});
while ((use = document.querySelector('svg:not(.sprite) > use'))) {
  const sym = document.querySelector(use.getAttribute('href'));
  use.parentNode.setAttribute('viewBox', sym.getAttribute('viewBox'));
  use.parentNode.innerHTML = sym.innerHTML;
}
document.querySelectorAll('symbol').forEach(s => s.remove());

// Waveforms
const out = [];
const rect = (x, y, w, h, c) => out.push(`<rect x="${x}" y="${y}" width="${w}" height="${h}" fill="${c}"/>`);
const text = (x, y, s, c) => out.push(`<text x="${x}" y="${y}" fill="${c}" textLength="${s.length * CH}" lengthAdjust="spacingAndGlyphs" xml:space="preserve">${esc(s)}</text>`);
const dashed = (x, y1, y2, dash, c, o = 1) =>
  out.push(`<path d="M${x + .5} ${y1}V${y2}" stroke="${c}" stroke-dasharray="${dash}" opacity="${o}" shape-rendering="crispEdges"/>`);
const cursors = o => {
  dashed(T0, 199, 1291, '15 3 3 3', '#fff', o);
  dashed(1000, 199, 1291, '4 7', '#ff0', o);
  dashed(2431, 199, 1291, '4 7', '#c8c8c8', o);
};

cursors(1);
signals.forEach((s, i) => rect(607, 233 + i * 20, 1938, 16, '#606060'));
signals.forEach((s, i) => {
  const y = 233 + i * 20;
  if (s.bit) {
    s.bit.forEach(([t, v], j) => {
      const x = tx(t), nx = s.bit[j + 1] ? tx(s.bit[j + 1][0]) : END;
      const c = v ? '#0f0' : '#0ff';
      rect(x, v ? y : y + 15, nx - x + (v ? 0 : 1), 1, c);
      if (j) rect(x, y, 1, 16, c);
    });
  } else {
    const c = s.color || '#ffe4c8';
    rect(T0 + 1, y, END - T0 - 1, 1, c);
    rect(T0 + 1, y + 15, END - T0 - 1, 1, c);
    s.bus.forEach(([t, v], j) => {
      const x = tx(t), nx = s.bus[j + 1] ? tx(s.bus[j + 1][0]) : END;
      if (j) {
        rect(x, y, 1, 16, '#606060');
        rect(x - 1, y, 1, 4, c); rect(x + 1, y, 1, 4, c);
        rect(x, y + 4, 1, 8, c);
        rect(x - 1, y + 12, 1, 4, c); rect(x + 1, y + 12, 1, 4, c);
      } else {
        rect(x + 1, y, 1, 4, c); rect(x + 1, y + 12, 1, 4, c);
      }
      const full = v.endsWith('*');
      text(full ? x + 2 : Math.floor((x + nx - v.length * CH) / 2), y + 11, v, '#0ff');
    });
  }
});
cursors(.4);

// Visible time range
rect(607, 180, 1938, 1, '#dfdfdf');
rect(608, 181, 1937, 16, '#808080');
rect(607, 197, 1938, 1, '#e8e8e8');
for (let t = 0; t <= 222000; t += 2000) {
  const h = t % 20000 === 0 ? (t ? 17 : 0) : t % 10000 === 0 ? 8 : 4;
  if (tx(t) < 2545 && h) rect(tx(t), 197 - h, 1, h, '#ff0');
  if (t % 20000 === 0) text(tx(t) + 2, 193, t.toLocaleString('en-US'), '#ff0');
}
rect(1000, 180, 1, 18, '#0f0');
rect(2431, 180, 1, 9, '#fff');

// Full time range
rect(607, 1293, 1938, 1, '#e0e0e0');
rect(608, 1294, 1937, 16, '#808080');
for (let i = 1; i < 143; i++) {
  const h = i % 10 === 0 ? 16 : i % 2 === 0 ? 8 : 4;
  rect(Math.round(617 + i * 13.453), 1310 - h, 1, h, '#ff0');
}
for (let k = 0; k <= 14; k++) text(Math.round(617 + k * 134.53) + 1, 1306, (k * 500000).toLocaleString('en-US'), '#ff0');
rect(629, 1294, 1, 16, '#0f0');
rect(673, 1294, 1, 16, '#fff');
rect(2535, 1294, 1, 16, '#2020d0');

document.getElementById('wave').innerHTML = out.join('');
```
